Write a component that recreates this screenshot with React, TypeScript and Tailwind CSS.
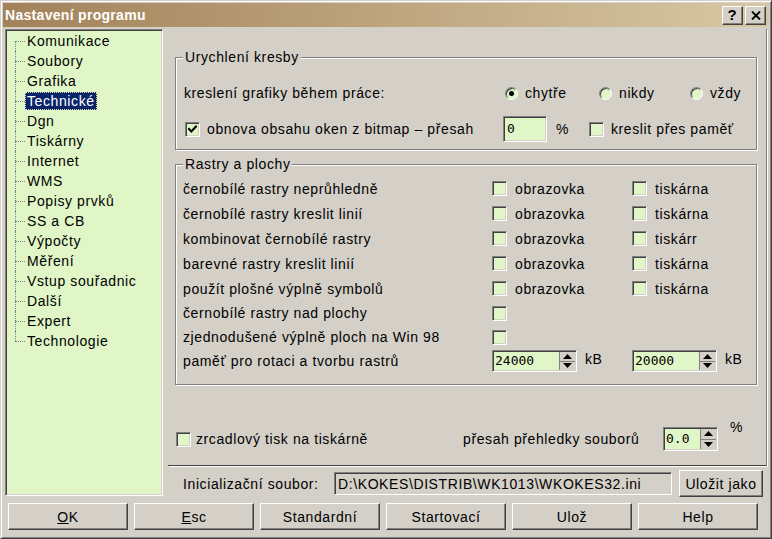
import React from 'react';

const treeItems = [
  'Komunikace', 'Soubory', 'Grafika', 'Technické', 'Dgn', 'Tiskárny', 'Internet', 'WMS',
  'Popisy prvků', 'SS a CB', 'Výpočty', 'Měření', 'Vstup souřadnic', 'Další', 'Expert', 'Technologie',
];

const rasterRows = [
  { label: 'černobílé rastry neprůhledně', cols: 2 },
  { label: 'černobílé rastry kreslit linií', cols: 2 },
  { label: 'kombinovat černobílé rastry', cols: 2, cut: true },
  { label: 'barevné rastry kreslit linií', cols: 2 },
  { label: 'použít plošné výplně symbolů', cols: 2 },
  { label: 'černobílé rastry nad plochy', cols: 1 },
  { label: 'zjednodušené výplně ploch na Win 98', cols: 1 },
];

function Check({ checked }: { checked?: boolean }) {
  return (
    <span className="w-[15px] h-[15px] shrink-0 flex items-center justify-center bg-[#e1f6c7] border border-t-[#808080] border-l-[#808080] border-b-white border-r-white shadow-[inset_1px_1px_0_#404040,inset_-1px_-1px_0_#d4d0c8]">
      {checked && (
        <svg width="9" height="9" viewBox="0 0 9 9">
          <path d="M1 4 L3.3 6.5 L8 1.5" stroke="black" strokeWidth="2" fill="none" strokeLinecap="square" />
        </svg>
      )}
    </span>
  );
}

function Radio({ on, label }: { on?: boolean; label: string }) {
  return (
    <span className="flex items-center gap-[7px]">
      <span className="w-[13px] h-[13px] rounded-full shrink-0 flex items-center justify-center bg-[#e1f6c7] border border-t-[#808080] border-l-[#808080] border-b-white border-r-white shadow-[inset_1px_1px_0_#404040]">
        {on && <span className="w-[5px] h-[5px] rounded-full bg-black" />}
      </span>
      <span>{label}</span>
    </span>
  );
}

function SpinArrows() {
  return (
    <span className="w-[16px] h-full shrink-0 flex flex-col bg-[#d4d0c8] border-l border-[#808080]">
      <span className="flex-1 flex items-center justify-center border-b border-[#808080]">
        <svg width="9" height="5" viewBox="0 0 9 5"><path d="M4.5 0 L9 5 L0 5 Z" fill="black" /></svg>
      </span>
      <span className="flex-1 flex items-center justify-center">
        <svg width="9" height="5" viewBox="0 0 9 5"><path d="M0 0 L9 0 L4.5 5 Z" fill="black" /></svg>
      </span>
    </span>
  );
}

function Spin({ value, wide }: { value: string; wide?: boolean }) {
  return (
    <span
      className={
        wide
          ? 'w-[85px] h-[22px] flex bg-[#e1f6c7] border border-t-[#808080] border-l-[#808080] border-b-white border-r-white shadow-[inset_1px_1px_0_#404040,inset_-1px_-1px_0_#d4d0c8] p-[1px]'
          : 'w-[55px] h-[24px] flex bg-[#e1f6c7] border border-t-[#808080] border-l-[#808080] border-b-white border-r-white shadow-[inset_1px_1px_0_#404040,inset_-1px_-1px_0_#d4d0c8] p-[1px]'
      }
    >
      <span className="flex-1 flex items-center pl-[1px] font-['DejaVu_Sans_Mono',monospace] text-[13px] tracking-normal">{value}</span>
      <SpinArrows />
    </span>
  );
}

function Button({ children, className }: { children: React.ReactNode; className: string }) {
  return (
    <div
      className={
        'flex items-center justify-center bg-[#d4d0c8] border border-t-white border-l-white border-b-[#404040] border-r-[#404040] shadow-[inset_-1px_-1px_0_#808080,inset_1px_1px_0_#d4d0c8] ' +
        className
      }
    >
      {children}
    </div>
  );
}

function TreeRow({ label, index }: { label: string; index: number }) {
  const first = index === 0;
  const last = index === treeItems.length - 1;
  const selected = label === 'Technické';
  return (
    <div className="h-[20px] flex items-center">
      <span className="relative ml-[8px] w-[10px] h-full shrink-0">
        <span
          className={
            first
              ? 'absolute left-0 top-[10px] bottom-0 border-l border-dotted border-[#808080]'
              : last
                ? 'absolute left-0 top-0 h-[10px] border-l border-dotted border-[#808080]'
                : 'absolute left-0 top-0 bottom-0 border-l border-dotted border-[#808080]'
          }
        />
        <span className="absolute left-0 right-0 top-[10px] border-t border-dotted border-[#808080]" />
      </span>
      <span
        className={
          selected
            ? 'h-[18px] flex items-center px-[2px] bg-[#0a246a] text-white outline-1 outline-dotted outline-[#e6dca8] -outline-offset-1'
            : 'h-[18px] flex items-center px-[2px]'
        }
      >
        {label}
      </span>
    </div>
  );
}

export default function App() {
  return (
    <div className="w-[772px] h-[539px] overflow-hidden flex flex-col bg-[#d4d0c8] font-['Liberation_Sans',Arial,sans-serif] text-[14px] leading-[16px] tracking-[0.6px] text-black border border-t-[#d4d0c8] border-l-[#d4d0c8] border-r-[#404040] border-b-[#404040] shadow-[inset_1px_1px_0_white,inset_-1px_-1px_0_#808080] p-[2px]">
      {/* title bar */}
      <div className="h-[24px] shrink-0 flex items-center bg-linear-to-r from-[#a3825a] to-[#d7c8a4] pl-[2px] pr-[3px]">
        <span className="flex-1 text-white font-bold tracking-[0.3px]">Nastavení programu</span>
        <Button className="w-[21px] h-[19px] font-bold text-[15px]">?</Button>
        <Button className="w-[21px] h-[19px] ml-[2px]">
          <svg width="10" height="9" viewBox="0 0 10 9">
            <path d="M1 0.5 L9 8.5 M9 0.5 L1 8.5" stroke="black" strokeWidth="1.8" />
          </svg>
        </Button>
      </div>

      <div className="flex mt-[2px]">
        {/* tree */}
        <div className="ml-[2px] w-[158px] h-[467px] shrink-0 bg-[#e1f6c7] border border-t-[#808080] border-l-[#808080] border-b-white border-r-white shadow-[inset_1px_1px_0_#404040,inset_-1px_-1px_0_#d4d0c8] p-[1px]">
          {treeItems.map((t, i) => (
            <TreeRow key={t} label={t} index={i} />
          ))}
        </div>

        {/* right side */}
        <div className="ml-[5px] w-[599px] flex flex-col">
          <div className="h-[437px] flex flex-col pl-[7px] pr-[9px] pt-[20px] border-r border-b border-r-[#808080] border-b-[#404040] shadow-[1px_1px_0_white]">
            <fieldset className="h-[101px] border border-[#808080] shadow-[inset_1px_1px_0_white,1px_1px_0_white] pl-[7px]">
              <legend className="px-[2px] bg-[#d4d0c8]">Urychlení kresby</legend>
              <div className="h-[26px] mt-[15px] flex items-center">
                <span className="w-[322px] pl-[1px]">kreslení grafiky během práce:</span>
                <span className="w-[94px]"><Radio on label="chytře" /></span>
                <span className="w-[91px]"><Radio label="nikdy" /></span>
                <Radio label="vždy" />
              </div>
              <div className="h-[26px] mt-[10px] flex items-center">
                <span className="w-[320px] pl-[2px] flex items-center gap-[7px]">
                  <Check checked />
                  <span className="whitespace-nowrap">obnova obsahu oken z bitmap – přesah</span>
                </span>
                <span className="w-[44px] h-[26px] flex items-center pl-[3px] bg-[#e1f6c7] font-['DejaVu_Sans_Mono',monospace] text-[13px] border border-t-[#808080] border-l-[#808080] border-b-white border-r-white shadow-[inset_1px_1px_0_#404040,inset_-1px_-1px_0_#d4d0c8]">
                  0
                </span>
                <span className="w-[42px] pl-[9px]">%</span>
                <span className="flex items-center gap-[7px]">
                  <Check />
                  <span className="w-[123px] overflow-hidden whitespace-nowrap">kreslit přes paměť</span>
                </span>
              </div>
            </fieldset>

            <fieldset className="h-[229px] mt-[6px] border border-[#808080] shadow-[inset_1px_1px_0_white,1px_1px_0_white] pl-[7px] pt-[4px]">
              <legend className="px-[2px] bg-[#d4d0c8]">Rastry a plochy</legend>
              {rasterRows.map((r, i) => (
                <div key={r.label} className={i < 5 ? 'h-[25px] flex items-center' : 'h-[24px] flex items-center'}>
                  <span className="w-[309px] whitespace-nowrap">{r.label}</span>
                  <span className="w-[140px] flex items-center gap-[8px]">
                    <Check />
                    {r.cols === 2 && <span>obrazovka</span>}
                  </span>
                  {r.cols === 2 && (
                    <span className="flex items-center gap-[8px]">
                      <Check />
                      <span>{r.cut ? 'tiskárr' : 'tiskárna'}</span>
                    </span>
                  )}
                </div>
              ))}
              <div className="h-[24px] flex items-center">
                <span className="w-[309px] whitespace-nowrap">paměť pro rotaci a tvorbu rastrů</span>
                <span className="w-[140px] flex items-center">
                  <Spin wide value="24000" />
                  <span className="ml-[8px] -mt-[4px]">kB</span>
                </span>
                <span className="flex items-center">
                  <Spin wide value="20000" />
                  <span className="ml-[8px] -mt-[4px]">kB</span>
                </span>
              </div>
            </fieldset>

            <div className="h-[24px] mt-[42px] flex items-center">
              <span className="w-[288px] pl-[1px] flex items-center gap-[5px]">
                <Check />
                <span className="whitespace-nowrap">zrcadlový tisk na tiskárně</span>
              </span>
              <span className="w-[200px] whitespace-nowrap">přesah přehledky souborů</span>
              <Spin value="0.0" />
              <span className="ml-[12px] self-start -mt-[8px]">%</span>
            </div>
          </div>

          <div className="h-[27px] mt-[4px] flex items-center pl-[15px]">
            <span className="w-[151px] whitespace-nowrap">Inicializační soubor:</span>
            <span className="w-[338px] h-[23px] flex items-center pl-[3px] whitespace-nowrap overflow-hidden border border-t-[#808080] border-l-[#808080] border-b-white border-r-white shadow-[inset_1px_1px_0_#404040,inset_-1px_-1px_0_#d4d0c8]">
              {'D:\\KOKES\\DISTRIB\\WK1013\\WKOKES32.ini'}
            </span>
            <Button className="ml-[7px] w-[84px] h-[27px]">Uložit jako</Button>
          </div>
        </div>
      </div>

      {/* bottom buttons */}
      <div className="mt-[6px] ml-[5px] flex gap-[6px]">
        <Button className="w-[120px] h-[27px]"><span><span className="underline">O</span>K</span></Button>
        <Button className="w-[120px] h-[27px]"><span><span className="underline">E</span>sc</span></Button>
        <Button className="w-[120px] h-[27px]">Standardní</Button>
        <Button className="w-[120px] h-[27px]">Startovací</Button>
        <Button className="w-[120px] h-[27px]">Ulož</Button>
        <Button className="w-[120px] h-[27px]">Help</Button>
      </div>
    </div>
  );
}
